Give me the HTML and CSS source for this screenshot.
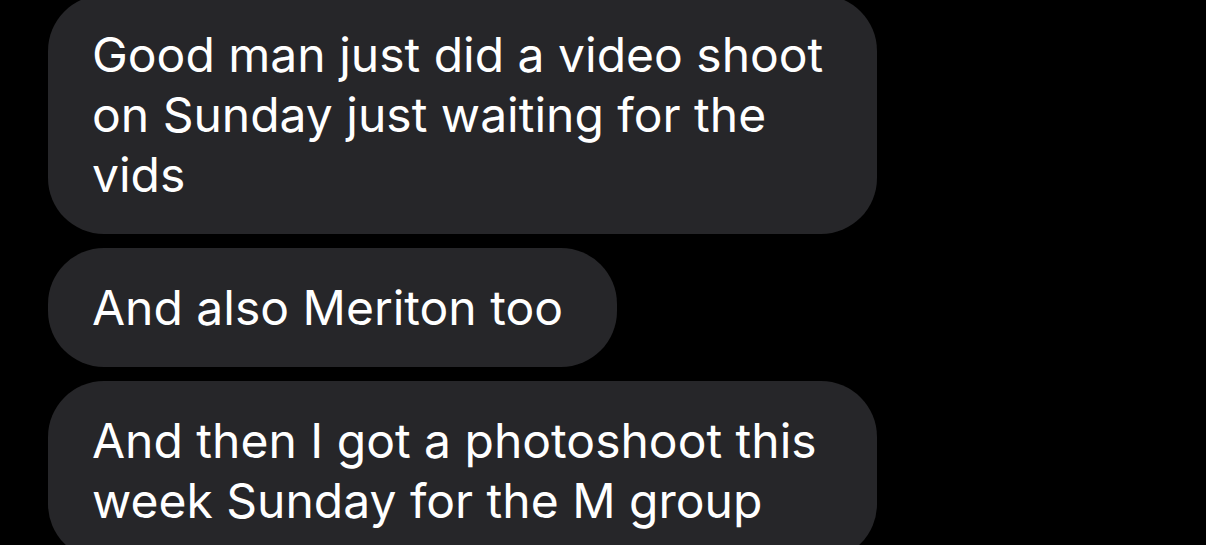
FILE: index.html
```html
<!DOCTYPE html>
<html lang="en">
<head>
  <meta charset="UTF-8" />
  <meta name="viewport" content="width=device-width, initial-scale=1.0"/>
  <title>Messages</title>
  <link rel="stylesheet" href="styles.css">
</head>
<body>
  <div class="thread">
    <div class="bubble multi">Good man just did a video shoot<br>on Sunday just waiting for the<br>vids</div>
    <div class="bubble">And also Meriton too</div>
    <div class="bubble multi">And then I got a photoshoot this<br>week Sunday for the M group</div>
  </div>
</body>
</html>
```

FILE: styles.css
```css
body {
  background-color: #000;
  font-family: 'Inter', 'Roboto', sans-serif;
  margin: 0;
  height: 545px;
  overflow: hidden;
}

.thread {
  display: flex;
  flex-direction: column;
  align-items: flex-start;
  gap: 14px;
  margin-top: -5px;
  padding-left: 48px;
}

.bubble {
  box-sizing: border-box;
  max-width: 830px;
  padding: 30px 54px 29px 44px;
  background-color: #262629;
  border-radius: 56px;
  color: #fff;
  font-size: 48px;
  line-height: 60px;
  white-space: nowrap;
}

/* wrapped messages take the full bubble width */
.bubble.multi {
  width: 829px;
}
```
